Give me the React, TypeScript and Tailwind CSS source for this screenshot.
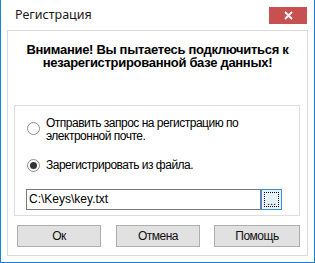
import React from "react";

const font = { fontFamily: '"Liberation Sans", Arial, sans-serif' };

function Btn({ label, w }: { label: string; w: string }) {
  return (
    <div
      className={`${w} h-[22px] bg-[#e1e1e1] border border-[#adadad] flex items-center justify-center text-[12px] tracking-[-0.5px] text-[#111] leading-none`}
    >
      {label}
    </div>
  );
}

function Radio({ checked }: { checked?: boolean }) {
  return (
    <div className="w-[13px] h-[13px] rounded-full border border-[#8f8f8f] bg-white flex items-center justify-center shrink-0">
      {checked && <div className="w-[7px] h-[7px] rounded-full bg-[#333]" />}
    </div>
  );
}

export default function App() {
  return (
    <div
      className="w-[315px] h-[263px] bg-white border-x border-b border-[#1883d7] flex flex-col text-black"
      style={font}
    >
      <div className="h-[30px] flex items-start shrink-0">
        <div
          className="pl-[14px] pt-[7px] text-[12.5px] leading-[16px] text-[#1a1a1a]"
          style={{ fontFamily: '"Noto Sans", sans-serif' }}
        >
          Регистрация
        </div>
        <div className="ml-auto mr-[7px] mt-[7px] w-[38px] h-[17px] bg-[#c75050] flex items-center justify-center">
          <svg width="9" height="9" viewBox="0 0 9 9">
            <path d="M1 1 L8 8 M8 1 L1 8" stroke="white" strokeWidth="1.8" />
          </svg>
        </div>
      </div>
      <div className="ml-[6px] w-[301px] h-[226px] border border-[#dadada] flex flex-col">
        <div className="pt-[12px] h-[74px] text-center font-bold text-[13px] leading-[13px] tracking-[-0.3px]">
          Внимание! Вы пытаетесь подключиться к
          <br />
          незарегистрированной базе данных!
        </div>
        <div className="ml-[6px] w-[286px] h-[111px] border border-[#dcdcdc] flex flex-col text-[12px] leading-[13px] tracking-[-0.5px]">
          <div className="flex items-start pl-[12px] pt-[11px]">
            <div className="mt-[5px]">
              <Radio />
            </div>
            <div className="ml-[6px]">
              Отправить запрос на регистрацию по
              <br />
              электронной почте.
            </div>
          </div>
          <div className="flex items-center pl-[12px] pt-[16px]">
            <Radio checked />
            <div className="ml-[6px]">Зарегистрировать из файла.</div>
          </div>
          <div className="flex pl-[11px] mt-[17px] tracking-normal">
            <div className="w-[235px] h-[21px] border border-[#7a7a7a] bg-white flex items-center pl-[2px] text-[12px]">
              C:\Keys\key.txt
            </div>
            <div className="w-[21px] h-[21px] border border-[#3c8de0] bg-[#e5f1fb] flex items-center justify-center">
              <div className="w-[15px] h-[15px] border border-dotted border-black flex items-end justify-center text-[11px] leading-[10px]">
                ...
              </div>
            </div>
          </div>
        </div>
        <div className="flex mt-[9px] ml-[9px]">
          <Btn label="Ок" w="w-[84px]" />
          <div className="w-[15px]" />
          <Btn label="Отмена" w="w-[84px]" />
          <div className="w-[14px]" />
          <Btn label="Помощь" w="w-[86px]" />
        </div>
      </div>
    </div>
  );
}
